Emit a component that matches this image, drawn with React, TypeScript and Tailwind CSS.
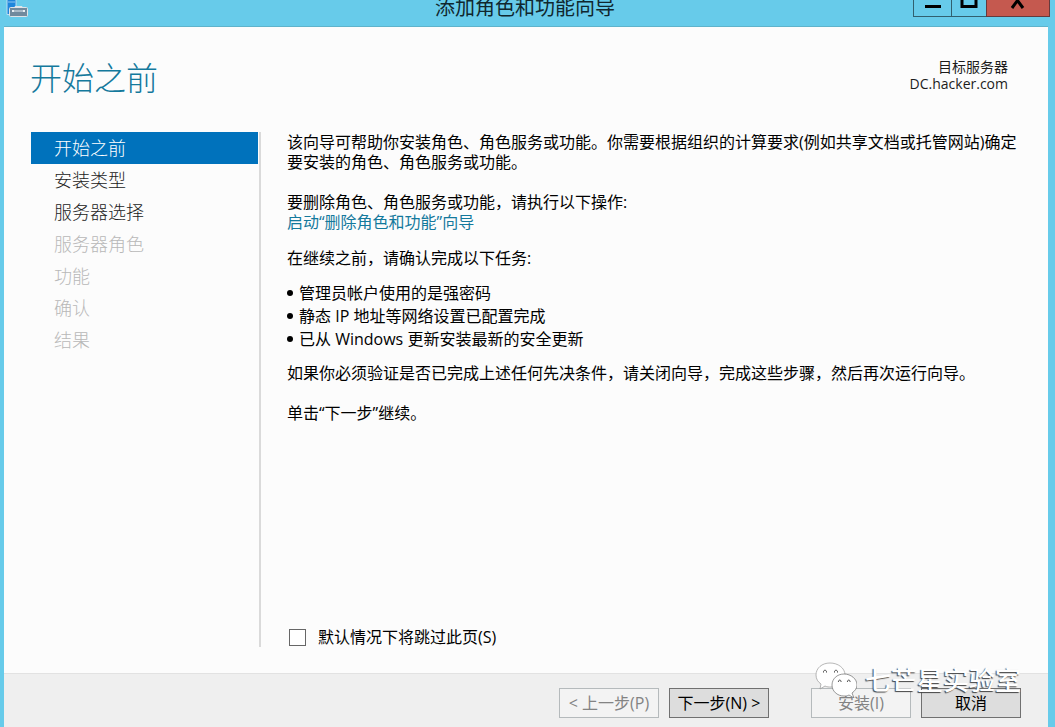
import { useState } from 'react'

const steps = [
  { label: '开始之前', enabled: true },
  { label: '安装类型', enabled: true },
  { label: '服务器选择', enabled: true },
  { label: '服务器角色', enabled: false },
  { label: '功能', enabled: false },
  { label: '确认', enabled: false },
  { label: '结果', enabled: false },
]

const tasks = [
  '管理员帐户使用的是强密码',
  '静态 IP 地址等网络设置已配置完成',
  '已从 Windows 更新安装最新的安全更新',
]

const ServerIcon = () => (
  <svg className="w-7 h-[18px] shrink-0" viewBox="0 0 28 18" fill="none">
    <path d="M7 -2h9v16.500H7z" fill="#1f86dc" stroke="#b9dcf3" />
    <path d="M8 2h7" stroke="#8cc6f2" />
    <path d="M15 8V6.500h7V8" stroke="#dfe6ea" />
    <rect x="9.500" y="7.500" width="18" height="9" rx="1" fill="#718a9d" stroke="#dfe3e6" />
    <path d="M12 11h13" stroke="#a9bac7" strokeWidth="2" />
    <path d="M12 10h2v2h-2zM23 10h2v2h-2z" fill="#e8eef2" />
  </svg>
)

const ChatIcon = () => (
  <svg className="w-[42px] h-9 shrink-0" viewBox="0 0 42 36" fill="#fff" stroke="#555" strokeWidth="0.6">
    <path d="M15 1C7 1 1 6 1 13c0 4 2 7 5 9l-1 5 5-3c2 1 4 1 6 1 8 0 14-5 14-12S23 1 15 1z" stroke="#888" />
    <path d="M29 12c-7 0-12 5-12 11s5 11 12 11c2 0 3 0 5-1l5 3-2-5c3-2 5-5 5-8 0-6-6-11-13-11z" />
    <path d="M8.500 10.500c-.5-3 3.500-3 3 0M19.500 10.500c-.5-3 3.500-3 3 0M23.500 20c-.5-2.500 3-2.500 2.500 0M32.500 20c-.5-2.500 3-2.500 2.500 0" fill="none" stroke="#333" strokeWidth="0.9" />
  </svg>
)

interface WizardButtonProps {
  label: string
  disabled?: boolean
  onClick?: () => void
}

function WizardButton({ label, disabled = false, onClick }: WizardButtonProps) {
  return (
    <button
      type="button"
      disabled={disabled}
      onClick={onClick}
      className="w-[100px] h-[30px] border border-[#707070] bg-[#dddddd] text-base leading-5 whitespace-nowrap text-black disabled:border-[#b5babc] disabled:bg-[#f3f3f3] disabled:text-[#838383]"
    >
      {label}
    </button>
  )
}

export default function App() {
  const [current, setCurrent] = useState(0)
  const [skip, setSkip] = useState(false)

  return (
    <div className="min-h-screen flex flex-col overflow-hidden bg-[#67cbea] text-black font-['Open_Sans','Noto_Sans_CJK_SC',sans-serif]">
      {/* Title bar */}
      <header className="h-[26px] flex items-start">
        <div className="flex-1">
          <ServerIcon />
        </div>
        <h1 className="text-xl leading-4 text-[#10272e]">添加角色和功能向导</h1>
        <div className="flex-1 flex justify-end pr-[5px]">
          <button type="button" aria-label="最小化" className="w-[38px] h-[17px] border-l border-b border-[#31606f] flex justify-center">
            <svg className="w-4 h-4" viewBox="0 0 16 16">
              <path d="M0 6.500h16" stroke="#000" strokeWidth="3" />
            </svg>
          </button>
          <button type="button" aria-label="最大化" className="w-[35px] h-[17px] border-l border-b border-[#31606f] flex justify-center">
            <svg className="w-[18px] h-4" viewBox="0 0 18 16" fill="none">
              <path d="M2 -5v11.500h14V-5" stroke="#000" strokeWidth="3" />
            </svg>
          </button>
          <button type="button" aria-label="关闭" className="w-16 h-[17px] border-x border-b border-[#653a3d] bg-[#c5594f] flex justify-center">
            <svg className="w-4 h-4" viewBox="0 0 16 16">
              <path d="M2 -7l11 15M13 -7L2 8" stroke="#000" strokeWidth="3" />
            </svg>
          </button>
        </div>
      </header>

      <div className="flex-1 flex flex-col ml-1 mr-[7px] border-t border-[#5fb3cb] bg-[#fcfcfc]">
        <div className="flex justify-between items-start pl-[26px] pr-10 pt-[31px] h-[105px]">
          <h2 className="text-[32px] leading-10 font-light text-[#14799c]">开始之前</h2>
          <div className="text-sm leading-[17px] text-right text-[#1c1c1c]">
            <p>目标服务器</p>
            <p>DC.hacker.com</p>
          </div>
        </div>

        <div className="flex-1 flex pl-[27px] pb-[26px]">
          <nav className="w-[230px] shrink-0 pr-px border-r-2 border-[#dadada]">
            {steps.map((step, index) => (
              <button
                key={step.label}
                type="button"
                disabled={!step.enabled}
                onClick={() => setCurrent(index)}
                className={`block w-full h-8 pl-[23px] text-left text-lg leading-8 font-light ${
                  index === current ? 'bg-[#0072bc] text-white' : step.enabled ? 'text-[#222222]' : 'text-[#b8b8b8]'
                }`}
              >
                {step.label}
              </button>
            ))}
          </nav>

          <main className="flex-1 flex flex-col pl-[26px] pr-4 text-base leading-5">
            <p>该向导可帮助你安装角色、角色服务或功能。你需要根据组织的计算要求(例如共享文档或托管网站)确定要安装的角色、角色服务或功能。</p>
            <p className="mt-5">要删除角色、角色服务或功能，请执行以下操作:</p>
            <a href="#remove" className="self-start text-[#14799c]">启动“删除角色和功能”向导</a>
            <p className="mt-4">在继续之前，请确认完成以下任务:</p>
            <ul className="mt-3.5">
              {tasks.map((task) => (
                <li key={task} className="flex items-center gap-1.5 leading-[23px]">
                  <span className="w-1.5 h-1.5 mb-0.5 rounded-full bg-black" />
                  {task}
                </li>
              ))}
            </ul>
            <p className="mt-3">如果你必须验证是否已完成上述任何先决条件，请关闭向导，完成这些步骤，然后再次运行向导。</p>
            <p className="mt-5">单击“下一步”继续。</p>
            <label className="mt-auto self-start flex items-center gap-3 pl-0.5">
              <input
                type="checkbox"
                checked={skip}
                onChange={(e) => setSkip(e.target.checked)}
                className="appearance-none w-[17px] h-[17px] border border-[#666666] bg-white checked:bg-[#0072bc]"
              />
              默认情况下将跳过此页(S)
            </label>
          </main>
        </div>

        <footer className="relative flex justify-end h-[54px] pt-3.5 pr-[27px] border-t border-[#e2e2e2] bg-[#efefef]">
          <div className="flex gap-2.5 mr-[42px]">
            <WizardButton label="< 上一步(P)" disabled />
            <WizardButton label="下一步(N) >" onClick={() => setCurrent(Math.min(current + 1, 2))} />
          </div>
          <div className="flex gap-2.5">
            <WizardButton label="安装(I)" disabled />
            <WizardButton label="取消" />
          </div>

          {/* Watermark */}
          <div className="absolute right-[27px] -top-3 flex items-center gap-2 pointer-events-none">
            <ChatIcon />
            <span className="text-[26px] leading-8 font-medium text-white [text-shadow:-1px_1px_1px_#444]">七芒星实验室</span>
          </div>
        </footer>
      </div>
    </div>
  )
}
